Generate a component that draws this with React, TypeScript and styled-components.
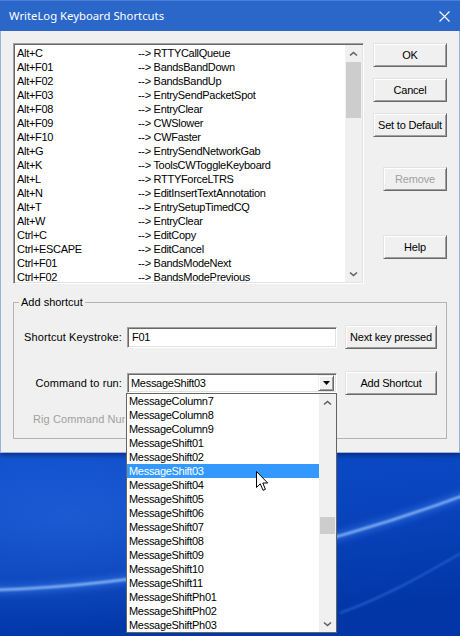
import React from "react";
import styled, { createGlobalStyle } from "styled-components";

const GlobalStyle = createGlobalStyle`
  html, body { margin: 0; padding: 0; }
  body {
    width: 460px;
    height: 636px;
    overflow: hidden;
    font-family: "Liberation Sans", Arial, sans-serif;
    font-size: 11px;
    letter-spacing: -0.3px;
    color: #000;
  }
`;

const shortcuts: [string, string][] = [
  ["Alt+C", "RTTYCallQueue"],
  ["Alt+F01", "BandsBandDown"],
  ["Alt+F02", "BandsBandUp"],
  ["Alt+F03", "EntrySendPacketSpot"],
  ["Alt+F08", "EntryClear"],
  ["Alt+F09", "CWSlower"],
  ["Alt+F10", "CWFaster"],
  ["Alt+G", "EntrySendNetworkGab"],
  ["Alt+K", "ToolsCWToggleKeyboard"],
  ["Alt+L", "RTTYForceLTRS"],
  ["Alt+N", "EditInsertTextAnnotation"],
  ["Alt+T", "EntrySetupTimedCQ"],
  ["Alt+W", "EntryClear"],
  ["Ctrl+C", "EditCopy"],
  ["Ctrl+ESCAPE", "EditCancel"],
  ["Ctrl+F01", "BandsModeNext"],
  ["Ctrl+F02", "BandsModePrevious"],
];

const commands = [
  "MessageColumn7",
  "MessageColumn8",
  "MessageColumn9",
  "MessageShift01",
  "MessageShift02",
  "MessageShift03",
  "MessageShift04",
  "MessageShift05",
  "MessageShift06",
  "MessageShift07",
  "MessageShift08",
  "MessageShift09",
  "MessageShift10",
  "MessageShift11",
  "MessageShiftPh01",
  "MessageShiftPh02",
  "MessageShiftPh03",
];

const Screen = styled.div`
  width: 460px;
  height: 636px;
  display: flex;
  flex-direction: column;
  overflow: hidden;
  background: #0a45c2;
`;

const Window = styled.div`
  position: relative;
  z-index: 1;
  height: 453px;
  display: flex;
  flex-direction: column;
  box-shadow: 0 2px 5px rgba(0, 0, 30, 0.45);
`;

const TitleBar = styled.div`
  height: 31px;
  background: #2b66c9;
  border-top: 1px solid #4a80d8;
  box-sizing: border-box;
  display: flex;
  align-items: center;
  justify-content: space-between;
  padding: 0 10px 0 9px;
`;

const Title = styled.span`
  color: #fff;
  font-family: "Noto Sans", "Open Sans", sans-serif;
  font-size: 11.3px;
  letter-spacing: 0;
  padding-bottom: 1px;
`;

const Body = styled.div`
  flex: 1;
  background: #f0f0f0;
  border-left: 1px solid #9bb3dc;
  border-right: 1px solid #9bb3dc;
  border-bottom: 1px solid #9bb3dc;
  padding: 12px 12px 0 12px;
  display: flex;
  flex-direction: column;
`;

const TopRow = styled.div`
  display: flex;
  gap: 8px;
  align-items: flex-start;
`;

const sunken = `
  border: 1px solid;
  border-color: #a0a0a0 #ffffff #ffffff #a0a0a0;
  box-shadow: inset 1px 1px 0 #696969, inset -1px -1px 0 #e3e3e3;
`;

const ListBox = styled.div`
  width: 352px;
  height: 241px;
  box-sizing: border-box;
  ${sunken}
  padding: 1px;
  background: #fff;
  display: flex;
`;

const Rows = styled.div`
  flex: 1;
  overflow: hidden;
  padding-top: 1px;
`;

const ShortcutRow = styled.div`
  height: 14px;
  display: flex;
  align-items: center;
  padding-left: 2px;
  white-space: nowrap;
`;

const KeyCell = styled.span`
  width: 121px;
  flex-shrink: 0;
`;

const ScrollBar = styled.div`
  width: 17px;
  flex-shrink: 0;
  background: #f0f0f0;
  display: flex;
  flex-direction: column;
`;

const ScrollArrow = styled.div`
  height: 17px;
  flex-shrink: 0;
  display: flex;
  align-items: center;
  justify-content: center;
`;

const ScrollTrack = styled.div<{ $offset: number }>`
  flex: 1;
  padding-top: ${(p) => p.$offset}px;
`;

const Thumb = styled.div<{ $size: number }>`
  height: ${(p) => p.$size}px;
  margin: 0 1px;
  background: #cdcdcd;
`;

const ButtonColumn = styled.div`
  width: 75px;
  display: flex;
  flex-direction: column;
  align-items: flex-end;
`;

const Button = styled.button<{ $width?: number; $top?: number; $disabled?: boolean }>`
  width: ${(p) => p.$width ?? 74}px;
  height: 24px;
  margin-top: ${(p) => p.$top ?? 0}px;
  padding: 0;
  font-family: inherit;
  font-size: 11px;
  letter-spacing: -0.2px;
  color: ${(p) => (p.$disabled ? "#a0a0a0" : "#000")};
  background: #f0f0f0;
  border: 1px solid;
  border-color: #e3e3e3 #696969 #696969 #e3e3e3;
  box-shadow: inset 1px 1px 0 #ffffff, inset -1px -1px 0 #a0a0a0;
  flex-shrink: 0;
`;

const GroupBox = styled.fieldset`
  margin: 12px 0 0 0;
  padding: 16px 0 12px 0;
  border: 1px solid #b4b4b4;
  min-width: 0;
`;

const Legend = styled.legend`
  margin-left: 5px;
  padding: 0 2px;
  line-height: 13px;
  font-size: 11px;
  letter-spacing: 0;
`;

const FormRow = styled.div<{ $top?: number }>`
  display: flex;
  align-items: center;
  margin-top: ${(p) => p.$top ?? 0}px;
`;

const FieldLabel = styled.span`
  width: 113px;
  box-sizing: border-box;
  padding-right: 5px;
  text-align: right;
  letter-spacing: 0.1px;
  flex-shrink: 0;
`;

const TextBox = styled.div`
  width: 210px;
  height: 21px;
  box-sizing: border-box;
  ${sunken}
  background: #fff;
  display: flex;
  align-items: center;
  padding-left: 4px;
`;

const ComboWrap = styled.div`
  position: relative;
  width: 210px;
  height: 20px;
`;

const ComboBox = styled.div`
  width: 210px;
  height: 20px;
  box-sizing: border-box;
  ${sunken}
  background: #fff;
  display: flex;
  align-items: center;
  padding: 2px 2px 2px 3px;
`;

const ComboText = styled.span`
  flex: 1;
`;

const ComboButton = styled.div`
  width: 16px;
  height: 16px;
  box-sizing: border-box;
  background: #f0f0f0;
  border: 1px solid;
  border-color: #f0f0f0 #696969 #696969 #f0f0f0;
  box-shadow: inset 1px 1px 0 #fff, inset -1px -1px 0 #a0a0a0;
  display: flex;
  align-items: center;
  justify-content: center;
`;

const SideButton = styled(Button)`
  margin-left: 8px;
`;

const DisabledLabel = styled.div`
  margin-top: 18px;
  margin-left: 19px;
  width: 92px;
  overflow: hidden;
  white-space: nowrap;
  line-height: 13px;
  letter-spacing: 0.1px;
  color: #a0a0a0;
`;

const DropList = styled.div`
  position: absolute;
  left: -1px;
  top: 100%;
  width: 211px;
  height: 240px;
  box-sizing: border-box;
  border: 1px solid #646464;
  background: #fff;
  display: flex;
  z-index: 10;
`;

const DropRows = styled.div`
  flex: 1;
  overflow: hidden;
  position: relative;
`;

const DropRow = styled.div<{ $selected?: boolean }>`
  height: 14px;
  display: flex;
  align-items: center;
  padding-left: 2px;
  white-space: nowrap;
  background: ${(p) => (p.$selected ? "#3399ff" : "transparent")};
  color: ${(p) => (p.$selected ? "#fff" : "#000")};
`;

const Pointer = styled.svg`
  position: absolute;
  left: 129px;
  top: 77px;
`;

const Wallpaper = styled.div`
  flex: 1;
  display: flex;
`;

const Chevron = ({ down }: { down?: boolean }) => (
  <svg width="9" height="6" viewBox="0 0 9 6">
    <polyline
      points={down ? "1,1.5 4.5,4.5 8,1.5" : "1,4.5 4.5,1.5 8,4.5"}
      fill="none"
      stroke="#606060"
      strokeWidth="1.6"
    />
  </svg>
);

const App: React.FC = () => {
  return (
    <Screen>
      <GlobalStyle />
      <Window>
        <TitleBar>
          <Title>WriteLog Keyboard Shortcuts</Title>
          <svg width="11" height="11" viewBox="0 0 11 11">
            <path d="M0.5 0.5 L10.5 10.5 M10.5 0.5 L0.5 10.5" stroke="#fff" strokeWidth="1.1" />
          </svg>
        </TitleBar>
        <Body>
          <TopRow>
            <ListBox>
              <Rows>
                {shortcuts.map(([key, cmd], i) => (
                  <ShortcutRow key={i}>
                    <KeyCell>{key}</KeyCell>
                    <span>--&gt; {cmd}</span>
                  </ShortcutRow>
                ))}
              </Rows>
              <ScrollBar>
                <ScrollArrow>
                  <Chevron />
                </ScrollArrow>
                <ScrollTrack $offset={0}>
                  <Thumb $size={56} />
                </ScrollTrack>
                <ScrollArrow>
                  <Chevron down />
                </ScrollArrow>
              </ScrollBar>
            </ListBox>
            <ButtonColumn>
              <Button>OK</Button>
              <Button $top={11}>Cancel</Button>
              <Button $top={11}>Set to Default</Button>
              <Button $top={30} $width={64} $disabled>
                Remove
              </Button>
              <Button $top={44} $width={64}>
                Help
              </Button>
            </ButtonColumn>
          </TopRow>
          <GroupBox>
            <Legend>Add shortcut</Legend>
            <FormRow>
              <FieldLabel>Shortcut Keystroke:</FieldLabel>
              <TextBox>F01</TextBox>
              <SideButton $width={92}>Next key pressed</SideButton>
            </FormRow>
            <FormRow $top={22}>
              <FieldLabel>Command to run:</FieldLabel>
              <ComboWrap>
                <ComboBox>
                  <ComboText>MessageShift03</ComboText>
                  <ComboButton>
                    <svg width="7" height="4" viewBox="0 0 7 4">
                      <polygon points="0,0 7,0 3.5,4" fill="#000" />
                    </svg>
                  </ComboButton>
                </ComboBox>
                <DropList>
                  <DropRows>
                    {commands.map((c) => (
                      <DropRow key={c} $selected={c === "MessageShift03"}>
                        {c}
                      </DropRow>
                    ))}
                    <Pointer width="13" height="21" viewBox="0 0 13 21">
                      <path
                        d="M0.5 0.5 L0.5 16.5 L4.3 12.8 L7 19.3 L9.4 18.3 L6.8 12 L11.7 12 Z"
                        fill="#fff"
                        stroke="#000"
                        strokeWidth="1"
                        strokeLinejoin="miter"
                      />
                    </Pointer>
                  </DropRows>
                  <ScrollBar>
                    <ScrollArrow>
                      <Chevron />
                    </ScrollArrow>
                    <ScrollTrack $offset={106}>
                      <Thumb $size={17} />
                    </ScrollTrack>
                    <ScrollArrow>
                      <Chevron down />
                    </ScrollArrow>
                  </ScrollBar>
                </DropList>
              </ComboWrap>
              <SideButton $width={92}>Add Shortcut</SideButton>
            </FormRow>
            <DisabledLabel>Rig Command Number:</DisabledLabel>
          </GroupBox>
        </Body>
      </Window>
      <Wallpaper>
        <svg width="460" height="183" viewBox="0 0 460 183">
          <defs>
            <linearGradient id="sky" x1="0" y1="0" x2="0.3" y2="1">
              <stop offset="0" stopColor="#0c4ccb" />
              <stop offset="0.55" stopColor="#0843bb" />
              <stop offset="1" stopColor="#0236a6" />
            </linearGradient>
            <radialGradient id="glow" cx="0.15" cy="0.35" r="0.6">
              <stop offset="0" stopColor="#2a6be0" stopOpacity="0.55" />
              <stop offset="1" stopColor="#2a6be0" stopOpacity="0" />
            </radialGradient>
            <filter id="soft" x="-10%" y="-50%" width="120%" height="200%">
              <feGaussianBlur stdDeviation="3" />
            </filter>
            <filter id="thin" x="-10%" y="-50%" width="120%" height="200%">
              <feGaussianBlur stdDeviation="0.8" />
            </filter>
          </defs>
          <rect width="460" height="183" fill="url(#sky)" />
          <rect width="460" height="183" fill="url(#glow)" />
          <path
            d="M-10 137 C 120 134, 290 108, 470 40"
            fill="none"
            stroke="#4f90ff"
            strokeWidth="9"
            strokeOpacity="0.35"
            filter="url(#soft)"
          />
          <path
            d="M-10 137 C 120 134, 290 108, 470 40"
            fill="none"
            stroke="#a8d4ff"
            strokeWidth="2.2"
            strokeOpacity="0.85"
            filter="url(#thin)"
          />
          <path
            d="M340 160 C 390 142, 430 118, 470 95"
            fill="none"
            stroke="#5d9dff"
            strokeWidth="1.6"
            strokeOpacity="0.45"
            filter="url(#thin)"
          />
        </svg>
      </Wallpaper>
    </Screen>
  );
};

export default App;
